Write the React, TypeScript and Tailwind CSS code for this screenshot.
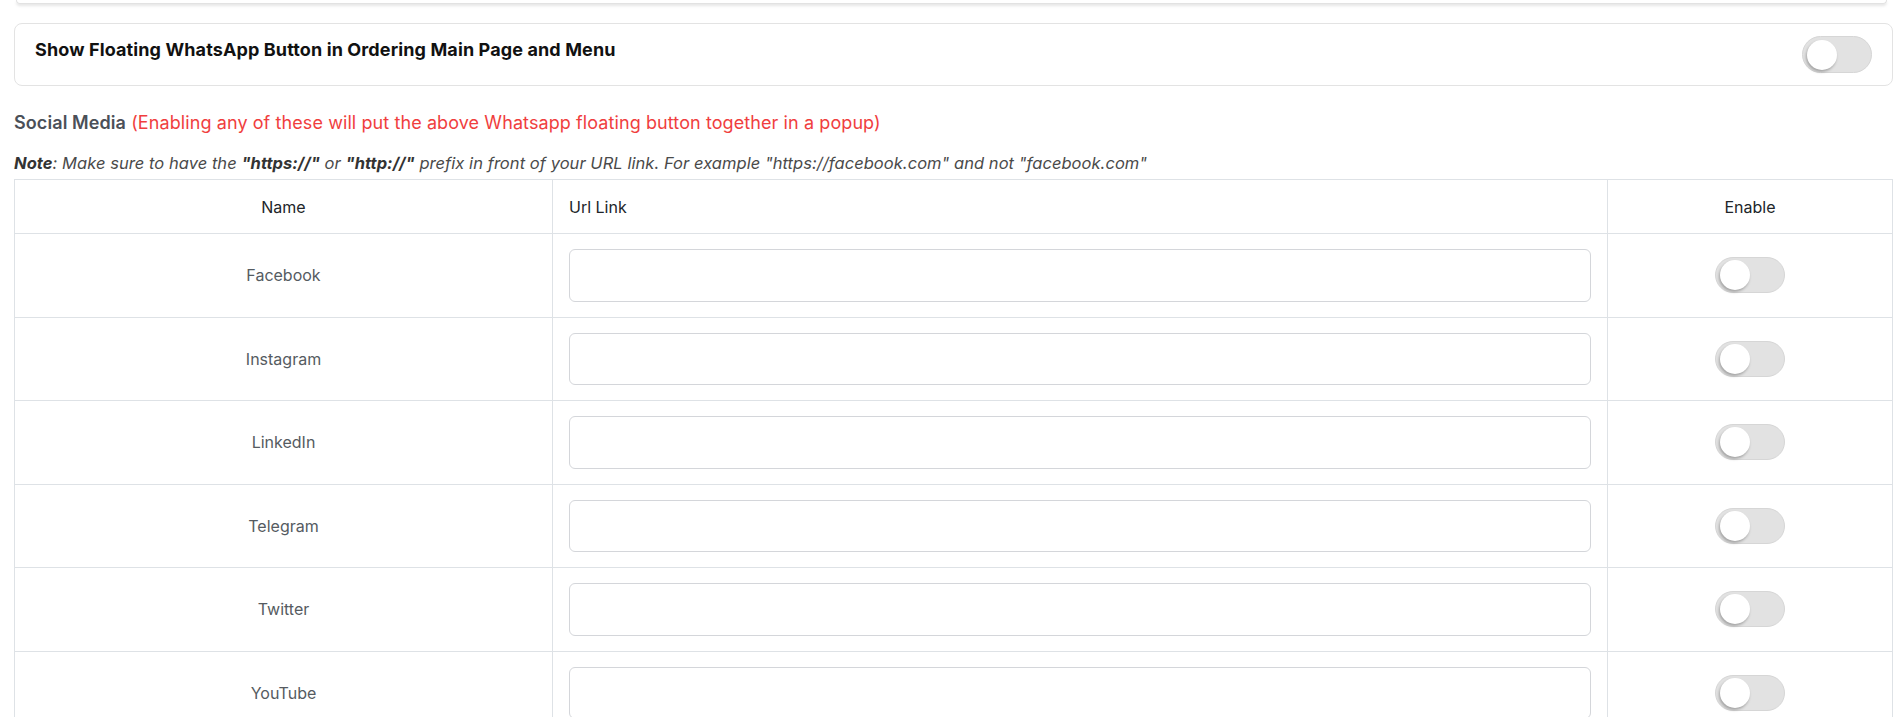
import { useState } from "react";

type Social = { id: string; label: string };

const SOCIALS: Social[] = [
  { id: "facebook", label: "Facebook" },
  { id: "instagram", label: "Instagram" },
  { id: "linkedin", label: "LinkedIn" },
  { id: "telegram", label: "Telegram" },
  { id: "twitter", label: "Twitter" },
  { id: "youtube", label: "YouTube" },
];

function Toggle({ on, onChange, tall }: { on: boolean; onChange: (v: boolean) => void; tall?: boolean }) {
  return (
    <button
      type="button"
      onClick={() => onChange(!on)}
      className={
        "relative w-[70px] shrink-0 rounded-full border border-[#d6d6d6] transition " +
        (tall ? "h-[37px] " : "h-[36px] ") +
        (on ? "bg-[#22c55e]" : "bg-[#e2e2e2]")
      }
    >
      <span
        className={
          "absolute top-1/2 h-[30px] w-[30px] -translate-y-1/2 rounded-full bg-white shadow-[-1px_2px_3px_rgba(0,0,0,0.28)] transition-all " +
          (on ? "left-[35px]" : "left-[4px]")
        }
      />
    </button>
  );
}

export default function App() {
  const [floating, setFloating] = useState(false);
  const [enabled, setEnabled] = useState<Record<string, boolean>>({});
  const [links, setLinks] = useState<Record<string, string>>({});

  return (
    <div className="min-h-screen bg-white pl-[14px] pr-px font-['Inter','Noto_Sans',sans-serif]">
      <div className="ml-[2px] mr-[6px] h-[4px] rounded-b-md border-x border-b border-[#e2e2e2] shadow-[0_2px_3px_rgba(0,0,0,0.1)]" />

      <div className="mt-[19px] flex h-[63px] items-start justify-between rounded-lg border border-[#e3e3e3] px-5 pt-3">
        <h3 className="pt-px text-[18px] leading-[26px] font-bold tracking-[0.12px] text-[#111]">
          Show Floating WhatsApp Button in Ordering Main Page and Menu
        </h3>
        <Toggle on={floating} onChange={setFloating} tall />
      </div>

      <p className="mt-[23px] text-[18px] leading-7 tracking-[0.09px]">
        <span className="font-semibold text-[#4b5058]">Social Media</span>{" "}
        <span className="text-[#f03e3e]">
          (Enabling any of these will put the above Whatsapp floating button together in a popup)
        </span>
      </p>

      <p className="mt-[14px] text-[16.5px] leading-6 tracking-[0.05px] italic text-[#4a4a4a]">
        <b className="text-[#333]">Note</b>: Make sure to have the <b className="text-[#333]">"https://"</b> or{" "}
        <b className="text-[#333]">"http://"</b> prefix in front of your URL link. For example "https://facebook.com" and
        not "facebook.com"
      </p>

      <table className="mt-[4px] w-[1879px] table-fixed border-collapse text-base">
        <colgroup>
          <col className="w-[538px]" />
          <col className="w-[1055px]" />
          <col />
        </colgroup>
        <thead>
          <tr className="h-[54px] text-[#212529]">
            <th className="border border-[#dee2e6] px-4 text-center font-normal">Name</th>
            <th className="border border-[#dee2e6] px-4 text-left font-normal">Url Link</th>
            <th className="border border-[#dee2e6] px-4 text-center font-normal">Enable</th>
          </tr>
        </thead>
        <tbody>
          {SOCIALS.map((s) => (
            <tr key={s.id}>
              <td className="border border-[#dee2e6] px-4 text-center text-[#555b61]">{s.label}</td>
              <td className="border border-[#dee2e6] px-4 py-[15px]">
                <input
                  type="text"
                  value={links[s.id] ?? ""}
                  onChange={(e) => setLinks({ ...links, [s.id]: e.target.value })}
                  className="block h-[52.5px] w-full rounded-md border border-[#d4d6da] px-3 text-[#333] outline-none"
                />
              </td>
              <td className="border border-[#dee2e6] px-4">
                <div className="flex justify-center">
                  <Toggle
                    on={!!enabled[s.id]}
                    onChange={(v) => setEnabled({ ...enabled, [s.id]: v })}
                  />
                </div>
              </td>
            </tr>
          ))}
        </tbody>
      </table>
    </div>
  );
}
